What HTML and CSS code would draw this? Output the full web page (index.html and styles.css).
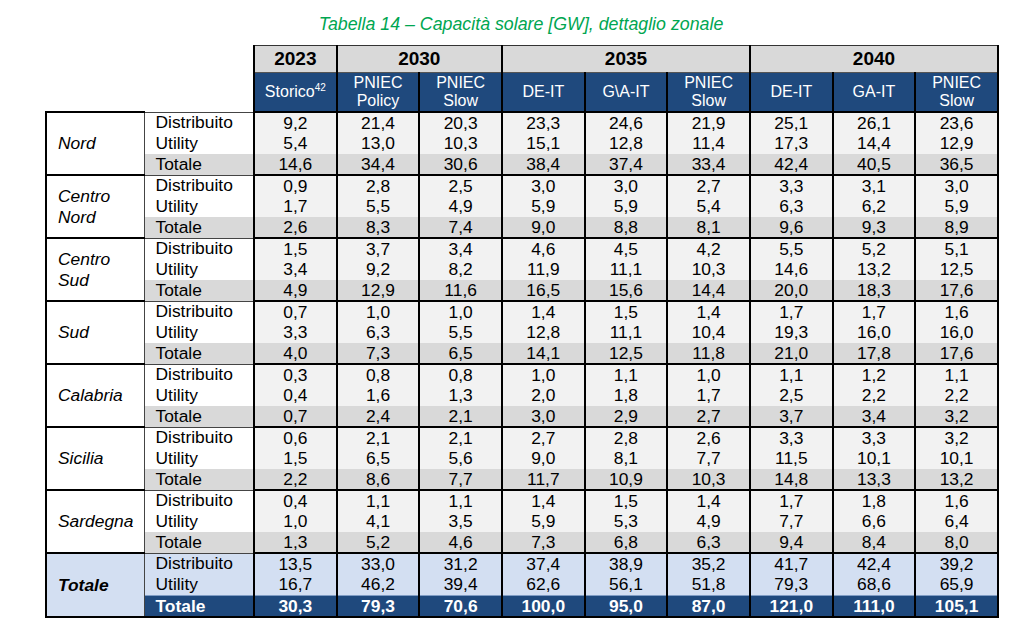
FILE: index.html
```html
<!DOCTYPE html>
<html lang="it">
<head>
<meta charset="utf-8">
<title>Tabella 14</title>
<link rel="stylesheet" href="styles.css">
</head>
<body>
<div class="page">
  <div class="caption">Tabella 14 – Capacità solare [GW], dettaglio zonale</div>
  <table class="tbl">
    <colgroup>
      <col class="c-reg"><col class="c-lab">
      <col class="c-d"><col class="c-d"><col class="c-d"><col class="c-d"><col class="c-d"><col class="c-d"><col class="c-d"><col class="c-d"><col class="c-d">
    </colgroup>
    <thead>
      <tr class="yr">
        <th class="blank" colspan="2"></th>
        <th>2023</th>
        <th colspan="2">2030</th>
        <th colspan="3">2035</th>
        <th colspan="3">2040</th>
      </tr>
      <tr class="sc">
        <th class="blank" colspan="2"></th>
        <th>Storico<sup>42</sup></th>
        <th>PNIEC<br>Policy</th>
        <th>PNIEC<br>Slow</th>
        <th>DE-IT</th>
        <th>G\A-IT</th>
        <th>PNIEC<br>Slow</th>
        <th>DE-IT</th>
        <th>GA-IT</th>
        <th>PNIEC<br>Slow</th>
      </tr>
    </thead>
    <tbody>
      <tr class="r1"><td class="reg" rowspan="3">Nord</td><td class="lab">Distribuito</td><td>9,2</td><td>21,4</td><td>20,3</td><td>23,3</td><td>24,6</td><td>21,9</td><td>25,1</td><td>26,1</td><td>23,6</td></tr>
      <tr class="r2"><td class="lab">Utility</td><td>5,4</td><td>13,0</td><td>10,3</td><td>15,1</td><td>12,8</td><td>11,4</td><td>17,3</td><td>14,4</td><td>12,9</td></tr>
      <tr class="r3"><td class="lab">Totale</td><td>14,6</td><td>34,4</td><td>30,6</td><td>38,4</td><td>37,4</td><td>33,4</td><td>42,4</td><td>40,5</td><td>36,5</td></tr>

      <tr class="r1"><td class="reg" rowspan="3">Centro<br>Nord</td><td class="lab">Distribuito</td><td>0,9</td><td>2,8</td><td>2,5</td><td>3,0</td><td>3,0</td><td>2,7</td><td>3,3</td><td>3,1</td><td>3,0</td></tr>
      <tr class="r2"><td class="lab">Utility</td><td>1,7</td><td>5,5</td><td>4,9</td><td>5,9</td><td>5,9</td><td>5,4</td><td>6,3</td><td>6,2</td><td>5,9</td></tr>
      <tr class="r3"><td class="lab">Totale</td><td>2,6</td><td>8,3</td><td>7,4</td><td>9,0</td><td>8,8</td><td>8,1</td><td>9,6</td><td>9,3</td><td>8,9</td></tr>

      <tr class="r1"><td class="reg" rowspan="3">Centro<br>Sud</td><td class="lab">Distribuito</td><td>1,5</td><td>3,7</td><td>3,4</td><td>4,6</td><td>4,5</td><td>4,2</td><td>5,5</td><td>5,2</td><td>5,1</td></tr>
      <tr class="r2"><td class="lab">Utility</td><td>3,4</td><td>9,2</td><td>8,2</td><td>11,9</td><td>11,1</td><td>10,3</td><td>14,6</td><td>13,2</td><td>12,5</td></tr>
      <tr class="r3"><td class="lab">Totale</td><td>4,9</td><td>12,9</td><td>11,6</td><td>16,5</td><td>15,6</td><td>14,4</td><td>20,0</td><td>18,3</td><td>17,6</td></tr>

      <tr class="r1"><td class="reg" rowspan="3">Sud</td><td class="lab">Distribuito</td><td>0,7</td><td>1,0</td><td>1,0</td><td>1,4</td><td>1,5</td><td>1,4</td><td>1,7</td><td>1,7</td><td>1,6</td></tr>
      <tr class="r2"><td class="lab">Utility</td><td>3,3</td><td>6,3</td><td>5,5</td><td>12,8</td><td>11,1</td><td>10,4</td><td>19,3</td><td>16,0</td><td>16,0</td></tr>
      <tr class="r3"><td class="lab">Totale</td><td>4,0</td><td>7,3</td><td>6,5</td><td>14,1</td><td>12,5</td><td>11,8</td><td>21,0</td><td>17,8</td><td>17,6</td></tr>

      <tr class="r1"><td class="reg" rowspan="3">Calabria</td><td class="lab">Distribuito</td><td>0,3</td><td>0,8</td><td>0,8</td><td>1,0</td><td>1,1</td><td>1,0</td><td>1,1</td><td>1,2</td><td>1,1</td></tr>
      <tr class="r2"><td class="lab">Utility</td><td>0,4</td><td>1,6</td><td>1,3</td><td>2,0</td><td>1,8</td><td>1,7</td><td>2,5</td><td>2,2</td><td>2,2</td></tr>
      <tr class="r3"><td class="lab">Totale</td><td>0,7</td><td>2,4</td><td>2,1</td><td>3,0</td><td>2,9</td><td>2,7</td><td>3,7</td><td>3,4</td><td>3,2</td></tr>

      <tr class="r1"><td class="reg" rowspan="3">Sicilia</td><td class="lab">Distribuito</td><td>0,6</td><td>2,1</td><td>2,1</td><td>2,7</td><td>2,8</td><td>2,6</td><td>3,3</td><td>3,3</td><td>3,2</td></tr>
      <tr class="r2"><td class="lab">Utility</td><td>1,5</td><td>6,5</td><td>5,6</td><td>9,0</td><td>8,1</td><td>7,7</td><td>11,5</td><td>10,1</td><td>10,1</td></tr>
      <tr class="r3"><td class="lab">Totale</td><td>2,2</td><td>8,6</td><td>7,7</td><td>11,7</td><td>10,9</td><td>10,3</td><td>14,8</td><td>13,3</td><td>13,2</td></tr>

      <tr class="r1"><td class="reg" rowspan="3">Sardegna</td><td class="lab">Distribuito</td><td>0,4</td><td>1,1</td><td>1,1</td><td>1,4</td><td>1,5</td><td>1,4</td><td>1,7</td><td>1,8</td><td>1,6</td></tr>
      <tr class="r2"><td class="lab">Utility</td><td>1,0</td><td>4,1</td><td>3,5</td><td>5,9</td><td>5,3</td><td>4,9</td><td>7,7</td><td>6,6</td><td>6,4</td></tr>
      <tr class="r3"><td class="lab">Totale</td><td>1,3</td><td>5,2</td><td>4,6</td><td>7,3</td><td>6,8</td><td>6,3</td><td>9,4</td><td>8,4</td><td>8,0</td></tr>
    </tbody>
    <tbody class="grand">
      <tr class="r1"><td class="reg" rowspan="3">Totale</td><td class="lab">Distribuito</td><td>13,5</td><td>33,0</td><td>31,2</td><td>37,4</td><td>38,9</td><td>35,2</td><td>41,7</td><td>42,4</td><td>39,2</td></tr>
      <tr class="r2"><td class="lab">Utility</td><td>16,7</td><td>46,2</td><td>39,4</td><td>62,6</td><td>56,1</td><td>51,8</td><td>79,3</td><td>68,6</td><td>65,9</td></tr>
      <tr class="r3"><td class="lab">Totale</td><td>30,3</td><td>79,3</td><td>70,6</td><td>100,0</td><td>95,0</td><td>87,0</td><td>121,0</td><td>111,0</td><td>105,1</td></tr>
    </tbody>
  </table>
</div>
</body>
</html>
```

FILE: styles.css
```css
html, body {
  margin: 0;
  padding: 0;
  background: #ffffff;
}

.page {
  width: 1024px;
  height: 640px;
  font-family: "Liberation Sans", Arial, sans-serif;
  color: #000;
}

.caption {
  padding-top: 14px;
  height: 20px;
  line-height: 20px;
  font-size: 17.8px;
  font-style: italic;
  color: #00a651;
  text-align: center;
  width: 1042px;
  margin-bottom: 11px;
}

.tbl {
  margin-left: 45px;
  border-collapse: collapse;
  table-layout: fixed;
  width: 952px;
}

.c-reg { width: 98px; }
.c-lab { width: 110px; }
.c-d { width: 82.66px; }

.tbl th, .tbl td {
  padding: 0;
}

.tbl th.blank {
  border: none;
  background: transparent;
}

.yr th {
  height: 26px;
  background: #d9d9d9;
  font-size: 19px;
  font-weight: bold;
  text-align: center;
  border: 2px solid #000;
  border-top: 1px solid #333;
  border-bottom: 1px solid #555;
}

.sc th {
  height: 38px;
  background: #1f497d;
  color: #fff;
  font-size: 16px;
  font-weight: normal;
  line-height: 18px;
  text-align: center;
  border-left: 2px solid #000;
  border-right: 2px solid #000;
}

.sc sup {
  font-size: 10px;
  vertical-align: 6px;
  line-height: 0;
}

.tbl td {
  height: 20px;
  line-height: 19px;
  font-size: 17.4px;
  text-align: center;
  background: #f2f2f2;
  border-left: 2px solid #000;
  border-right: 2px solid #000;
}

.tbl tr.r2 td {
  height: 21px;
}

.tbl tr.r1 td {
  border-top: 2px solid #000;
}

.tbl tr.r3 td {
  background: #d9d9d9;
}

.tbl td.reg {
  background: #fff;
  text-align: left;
  font-style: italic;
  padding-left: 11px;
  line-height: 21px;
  border-left: 2px solid #000;
  border-right: 1px solid #444;
  border-top: 1px solid #444;
  border-bottom: 1px solid #444;
}

.tbl td.lab {
  text-align: left;
  padding-left: 11px;
  background: #fff;
  border-left: 1px solid #444;
}

.tbl tr.r1 td.lab {
  border-top: 1px solid #444;
}

.tbl tr.r3 td.lab {
  background: #d9d9d9;
}

.grand td {
  background: #d3dff2;
}

.grand tr.r1 td, .grand tr.r2 td, .grand td.lab {
  background: #d3dff2;
}

.grand td.reg {
  background: #d3dff2;
  font-weight: bold;
  border-bottom: 2px solid #000;
}

.grand tr.r3 td, .grand tr.r3 td.lab {
  background: #1f497d;
  color: #fff;
  font-weight: bold;
  border-bottom: 2px solid #000;
}

.grand tr.r3 td {
  border-top: 1px solid #7f9cc4;
}

.grand tr.r1 td {
  border-top: 2px solid #000;
}
```
